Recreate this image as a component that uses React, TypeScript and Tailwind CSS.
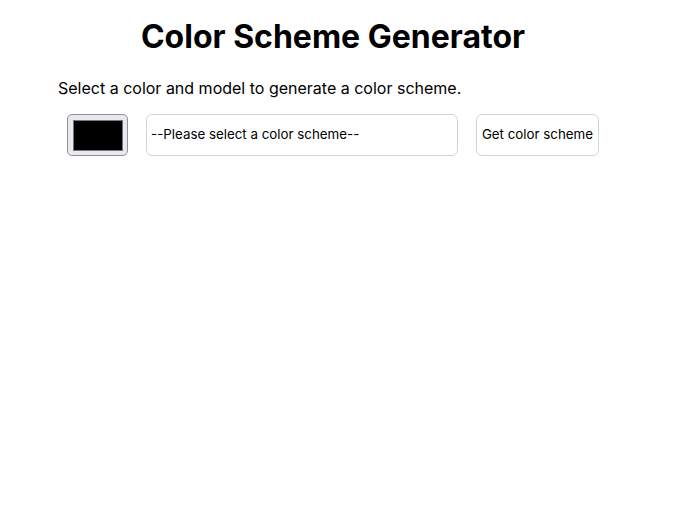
import { useState } from "react";

const schemes = [
  "monochrome",
  "monochrome-dark",
  "monochrome-light",
  "analogic",
  "complement",
  "analogic-complement",
  "triad",
  "quad",
];

export default function App() {
  const [color, setColor] = useState("#000000");
  const [mode, setMode] = useState("");

  return (
    <div className="min-h-[520px] bg-white text-black font-['Inter',sans-serif]">
      <main className="ml-[58px] w-[550px] pt-[17px]">
        <h1 className="text-center text-[32px] leading-[39px] font-bold">Color Scheme Generator</h1>
        <p className="mt-[23px] text-base leading-[19px]">Select a color and model to generate a color scheme.</p>
        <div className="mt-[16px] flex justify-center gap-[18px]">
          <label className="relative flex h-[42px] w-[61px] items-center justify-center rounded-[5px] border border-[#8f8f9d] bg-[#e9e9ed]">
            <span className="h-[31px] w-[50px] border border-[#777] bg-black" style={{ backgroundColor: color }} />
            <input
              type="color"
              value={color}
              onChange={(e) => setColor(e.target.value)}
              className="absolute inset-0 opacity-0"
            />
          </label>
          <select
            value={mode}
            onChange={(e) => setMode(e.target.value)}
            className="h-[42px] w-[312px] appearance-none rounded-[6px] border border-[#d4d4d8] bg-white pl-[4px] text-[13.333px] text-black outline-none"
          >
            <option value="">--Please select a color scheme--</option>
            {schemes.map((s) => (
              <option key={s} value={s}>{s}</option>
            ))}
          </select>
          <button className="h-[42px] w-[123px] whitespace-nowrap rounded-[6px] border border-[#d4d4d8] bg-white px-0 text-[13.333px] text-black">
            Get color scheme
          </button>
        </div>
      </main>
    </div>
  );
}
